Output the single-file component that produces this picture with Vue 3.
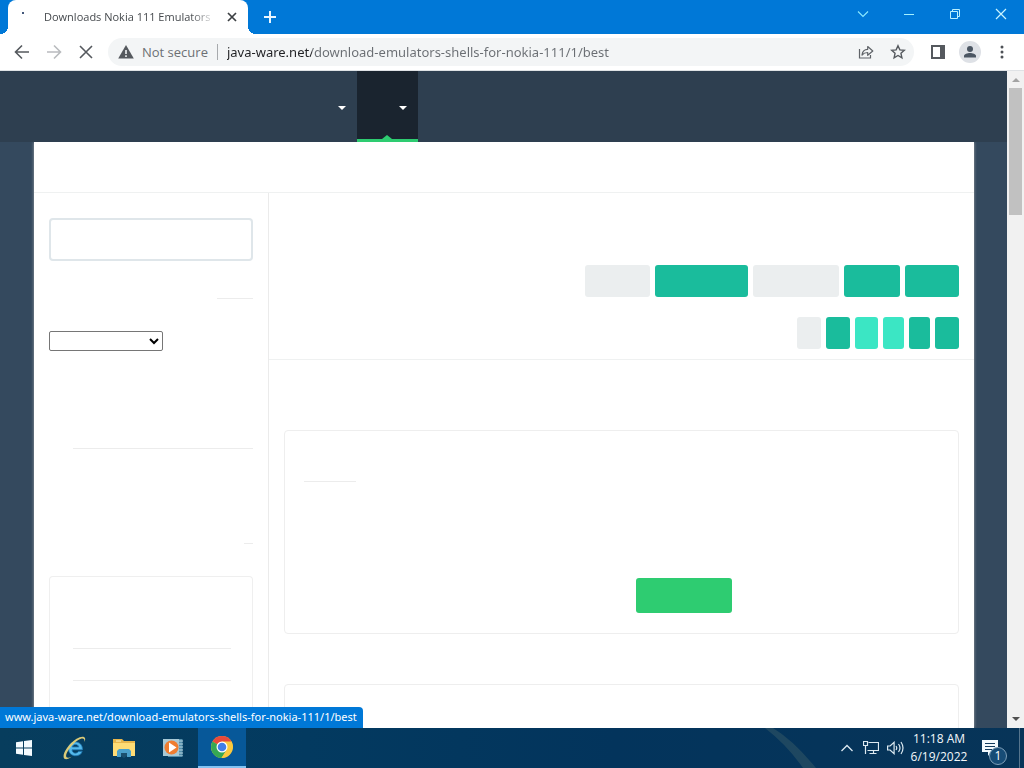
<script setup>
import { ref } from 'vue'

const address = ref('java-ware.net/download-emulators-shells-for-nokia-111/1/best')
const search = ref('')
const filters = [
  { name: 'Filter one', size: 'w65', tone: 'muted' },
  { name: 'Filter two', size: 'w93', tone: 'teal' },
  { name: 'Filter three', size: 'w86', tone: 'muted' },
  { name: 'Filter four', size: 'w56', tone: 'teal' },
  { name: 'Filter five', size: 'w54', tone: 'teal' }
]
const pages = [
  { name: 'Previous', size: 'w24', tone: 'muted' },
  { name: 'Page 1', size: 'w24', tone: 'teal' },
  { name: 'Page 2', size: 'w23', tone: 'mint' },
  { name: 'Page 3', size: 'w21', tone: 'mint' },
  { name: 'Page 4', size: 'w21', tone: 'teal' },
  { name: 'Next', size: 'w24', tone: 'teal' }
]
</script>

<template>
  <div class="screen">
    <header class="titlebar">
      <div class="tab">
        <span class="spinner"></span>
        <span class="tab-title">Downloads Nokia 111 Emulators</span>
        <button class="icon-btn tab-close" aria-label="Close tab">
          <svg width="10" height="10" viewBox="0 0 10 10"><path d="M1 1l8 8M9 1L1 9" stroke="#3c4043" stroke-width="1.7" fill="none" /></svg>
        </button>
      </div>
      <button class="icon-btn new-tab" aria-label="New tab">
        <svg width="14" height="14" viewBox="0 0 14 14"><path d="M7 1v12M1 7h12" stroke="#e9f6ff" stroke-width="2" fill="none" /></svg>
      </button>
      <div class="window-controls">
        <button class="icon-btn" aria-label="Search tabs">
          <svg width="12" height="12" viewBox="0 0 12 12"><path d="M1 3.5l5 5 5-5" stroke="#8deaff" stroke-width="1.1" fill="none" /></svg>
        </button>
        <button class="icon-btn" aria-label="Minimize">
          <svg width="12" height="12" viewBox="0 0 12 12"><path d="M1 6.5h10" stroke="#a5f1ff" fill="none" /></svg>
        </button>
        <button class="icon-btn" aria-label="Restore">
          <svg width="12" height="12" viewBox="0 0 12 12"><path d="M1.5 3.5h7v7h-7zM3.5 3.5v-2h7v7h-2" stroke="#b9f0ff" fill="none" /></svg>
        </button>
        <button class="icon-btn" aria-label="Close window">
          <svg width="12" height="12" viewBox="0 0 12 12"><path d="M1 1l10 10M11 1L1 11" stroke="#c9f4ff" stroke-width="1.2" fill="none" /></svg>
        </button>
      </div>
    </header>

    <div class="toolbar">
      <button class="icon-btn nav-btn" aria-label="Back">
        <svg width="16" height="16" viewBox="0 0 16 16"><path d="M15 8H2M8 1.5L1.5 8 8 14.5" stroke="#55595e" stroke-width="1.6" fill="none" /></svg>
      </button>
      <button class="icon-btn nav-btn" aria-label="Forward">
        <svg width="16" height="16" viewBox="0 0 16 16"><path d="M1 8h13M8 1.5L14.5 8 8 14.5" stroke="#b9bbbe" stroke-width="1.6" fill="none" /></svg>
      </button>
      <button class="icon-btn nav-btn" aria-label="Stop">
        <svg width="14" height="14" viewBox="0 0 14 14"><path d="M1 1l12 12M13 1L1 13" stroke="#55595e" stroke-width="1.6" fill="none" /></svg>
      </button>
      <div class="omnibox">
        <svg class="warn" width="16" height="14" viewBox="0 0 16 14"><path d="M8 0l7.8 13.500H.2z" fill="#55595e" /><path d="M8 5v4M8 10.300v1.700" stroke="#f1f3f4" stroke-width="1.6" /></svg>
        <label class="secure" for="address">Not secure</label>
        <span class="sep"></span>
        <input id="address" v-model="address" class="address" type="text" spellcheck="false" />
        <button class="icon-btn omni-btn" aria-label="Share">
          <svg width="16" height="16" viewBox="0 0 16 16"><path d="M1.5 5v9h11v-3" stroke="#5f6368" stroke-width="1.2" fill="none" /><path d="M4 11c.4-3.700 2.300-5.600 5.700-5.700V2.500L14.800 7 9.700 11.300V8.500C7.300 8.500 5.500 9.200 4 11z" stroke="#5f6368" stroke-width="1.2" stroke-linejoin="round" fill="none" /></svg>
        </button>
        <button class="icon-btn omni-btn" aria-label="Bookmark">
          <svg width="16" height="16" viewBox="0 0 16 16"><path d="M8 1.800l1.850 4.100 4.450.45-3.350 3 .95 4.400L8 11.500l-3.900 2.250.95-4.400-3.350-3 4.450-.45z" stroke="#55595e" stroke-width="1.4" fill="none" /></svg>
        </button>
      </div>
      <button class="icon-btn side-btn" aria-label="Side panel">
        <svg width="14" height="14" viewBox="0 0 14 14"><path d="M1 1h12v12H1z" stroke="#55595e" stroke-width="2" fill="none" /><path d="M9 1h4v12H9z" fill="#55595e" /></svg>
      </button>
      <button class="icon-btn side-btn" aria-label="Profile">
        <svg width="22" height="22" viewBox="0 0 22 22"><circle cx="11" cy="11" r="11" fill="#dee1e6" /><circle cx="11" cy="8" r="3" fill="#4b5663" /><path d="M5 16.500v-1.500c0-2 3.500-3 6-3s6 1 6 3v1.500z" fill="#4b5663" /></svg>
      </button>
      <button class="icon-btn side-btn" aria-label="Menu">
        <svg width="4" height="14" viewBox="0 0 4 14"><circle cx="2" cy="2" r="1.5" fill="#4d5156" /><circle cx="2" cy="7" r="1.5" fill="#4d5156" /><circle cx="2" cy="12" r="1.5" fill="#4d5156" /></svg>
      </button>
    </div>

    <div class="viewport">
      <div class="site">
        <nav class="site-nav">
          <a class="nav-item" href="#" aria-label="Catalog"><span class="caret"></span></a>
          <a class="nav-item active" href="#" aria-label="Downloads"><span class="caret"></span></a>
        </nav>
        <div class="container">
          <div class="crumbs"></div>
          <div class="columns">
            <aside class="sidebar">
              <input v-model="search" class="search" type="text" aria-label="Search" />
              <hr class="rule r36" />
              <select class="picker" aria-label="Category"><option></option></select>
              <hr class="rule r180" />
              <hr class="rule r9" />
              <div class="panel">
                <hr class="rule" />
                <hr class="rule" />
              </div>
            </aside>
            <main class="main">
              <div class="controls">
                <div class="button-row">
                  <button v-for="f in filters" :key="f.name" class="chip" :class="[f.size, f.tone]" :aria-label="f.name"></button>
                </div>
                <div class="button-row">
                  <button v-for="p in pages" :key="p.name" class="chip" :class="[p.size, p.tone]" :aria-label="p.name"></button>
                </div>
              </div>
              <div class="cards">
                <article class="card">
                  <hr class="rule r52" />
                  <button class="download" aria-label="Download"></button>
                </article>
                <article class="card"></article>
              </div>
            </main>
          </div>
        </div>
      </div>
      <div class="scrollbar">
        <svg class="arrow" width="17" height="17" viewBox="0 0 17 17"><path d="M5 11l4-4 4 4z" fill="#a3a3a3" /></svg>
        <div class="thumb"></div>
        <svg class="arrow" width="17" height="17" viewBox="0 0 17 17"><path d="M5 6l4 4 4-4z" fill="#505050" /></svg>
      </div>
      <div class="status">www.java-ware.net/download-emulators-shells-for-nokia-111/1/best</div>
    </div>

    <footer class="taskbar">
      <button class="task start" aria-label="Start">
        <svg width="16" height="16" viewBox="0 0 16 16"><path d="M0 2.200l7-1v6.300H0zM8 1l8-1v7.500H8zM0 8.500h7v6.300l-7-1zM8 8.500h8V16l-8-1z" fill="#f4fbff" /></svg>
      </button>
      <button class="task" aria-label="Internet Explorer">
        <svg width="26" height="26" viewBox="0 0 26 26">
          <path d="M20.500 14.800H10c.2 3.900 5 4.300 6.500 1.600h3.700C18.300 22.800 6.300 22.400 6.500 13.500 6.700 4.800 20.900 4.500 20.500 14.800zM10.200 12h6.600c-.6-3.500-6-3.500-6.600 0z" fill="#55b9ea" stroke="#1f78b4" stroke-width=".8" />
          <path d="M22.500 7C25 1.500 20.500 0 14.500 3.800 7 8.500 1 17.500 1.600 22c.4 3.300 4.500 2.500 8-.2-3.300 1.500-5.600 1.300-5.500-1 .2-4 6-11.800 11.800-15.500 4.300-2.700 7-2.300 6.600 1.700z" fill="#dccb78" />
        </svg>
      </button>
      <button class="task" aria-label="File Explorer">
        <svg width="22" height="20" viewBox="0 0 22 20"><path d="M0 1h9l2 2h11v6H0z" fill="#e8b64c" /><path d="M0 5h22v13H0z" fill="#ffdc75" /><path d="M3 3h5" stroke="#fff3bd" /><path d="M4 19v-6l2-2h10l2 2v6h-4v-4H8v4z" fill="#4aa0cb" /><path d="M8 15h6v3l-3 2-3-2z" fill="#1b506f" /></svg>
      </button>
      <button class="task" aria-label="Media Player">
        <svg width="20" height="20" viewBox="0 0 20 20"><path d="M5 1h14.500v18H5z" fill="#548eaa" /><path d="M0 1h16v17H0z" fill="#a8c9d6" /><path d="M17 2v16M19 2v16" stroke="#b7d5df" stroke-dasharray="2 1" /><circle cx="8.500" cy="9.500" r="7" fill="#ef7d31" /><path d="M6 4.500v10l7.500-5z" fill="#fff" /></svg>
      </button>
      <button class="task running" aria-label="Chrome">
        <svg width="24" height="24" viewBox="0 0 24 24"><circle cx="12" cy="12" r="11" fill="#fbc93e" /><path d="M12 12L2.500 6.500C6.700-.8 17.300-.8 21.500 6.500z" fill="#e9493b" /><path d="M2.500 6.500C-1.200 13 2.600 22.500 11.500 23l5.200-8.300L12 12z" fill="#36a853" /><path d="M12 6.500h9.500C25 13.500 20 23 11.500 23l5.300-8.200z" fill="#fbc93e" /><circle cx="12" cy="12" r="5.500" fill="#fff" /><circle cx="12" cy="12" r="4.300" fill="#427ee8" /></svg>
      </button>
      <div class="wallpaper">
        <svg width="80" height="40" viewBox="0 0 80 40"><path d="M4 0h8q20 12 43 40H42Q26 17 4 0z" fill="#7b8f78" opacity=".22" /></svg>
      </div>
      <div class="tray">
        <button class="icon-btn" aria-label="Show hidden icons">
          <svg width="12" height="8" viewBox="0 0 12 8"><path d="M.5 7L6 1.500 11.500 7" stroke="#dce9f1" stroke-width="1.300" fill="none" /></svg>
        </button>
        <button class="icon-btn" aria-label="Network">
          <svg width="16" height="14" viewBox="0 0 16 14"><path d="M5.500 1.500h10v8h-11M2.500 5v8M10.500 9.500v3M6.500 12.500h7M.5.5h4v4h-4z" stroke="#dce9f1" stroke-width="1.200" fill="none" /></svg>
        </button>
        <button class="icon-btn" aria-label="Volume">
          <svg width="17" height="14" viewBox="0 0 17 14"><path d="M.6 5h2.500l4-3.700v11.400L3.100 9H.6zM9 5q1.500 2 0 4M11.500 3q3 4 0 8M14 1q4 6 0 12" stroke="#dce9f1" stroke-width="1.200" fill="none" /></svg>
        </button>
      </div>
      <div class="clock"><time>11:18 AM</time><time>6/19/2022</time></div>
      <button class="icon-btn notify" aria-label="Notifications">
        <svg width="16" height="16" viewBox="0 0 16 16"><path d="M0 0h16v12H9l-3 4v-4H0z" fill="#f2f9fd" /><path d="M3 3.500h10M3 6.500h10M3 9.500h7" stroke="#123c5e" /></svg>
        <span class="badge">1</span>
      </button>
      <span class="show-desktop"></span>
    </footer>
  </div>
</template>

<style>
body { margin: 0; }
</style>

<style scoped>
* { box-sizing: border-box; }
.screen {
  display: flex; flex-direction: column; height: 100vh; overflow: hidden;
  font-family: "Open Sans", "Noto Sans", sans-serif; font-size: 13px; background: #fff;
}
button { border: 0; padding: 0; margin: 0; font: inherit; }
.icon-btn { display: flex; align-items: center; justify-content: center; background: none; }
svg { display: block; flex: none; }

.titlebar { display: flex; flex: none; height: 34px; background: #0078d7; }
.tab {
  position: relative; display: flex; align-items: center; width: 240px; margin-left: 8px;
  padding: 0 10px 0 14px; background: #fff; border-radius: 8px 8px 0 0;
}
.tab::before, .tab::after { content: ""; position: absolute; bottom: 0; width: 8px; height: 8px; }
.tab::before { left: -8px; background: radial-gradient(circle at 0 0, #0078d7 8px, #fff 8px); }
.tab::after { right: -8px; background: radial-gradient(circle at 100% 0, #0078d7 8px, #fff 8px); }
.spinner { width: 2px; height: 2px; margin: 0 20px 8px 0; background: #43577a; }
.tab-title {
  flex: 1; overflow: hidden; white-space: nowrap; font-size: 11px; line-height: 18px; color: #45494d;
  -webkit-mask-image: linear-gradient(90deg, #000 85%, transparent);
  mask-image: linear-gradient(90deg, #000 85%, transparent);
}
.tab-close { width: 12px; height: 16px; margin-left: 10px; }
.new-tab { width: 28px; margin-left: 8px; }
.window-controls { display: flex; margin-left: auto; padding-bottom: 6px; }
.window-controls .icon-btn { width: 46px; }

.toolbar {
  display: flex; align-items: center; flex: none; height: 37px; padding: 0 6px;
  background: #fff; border-bottom: 1px solid #dfe2e5;
}
.nav-btn { width: 32px; height: 28px; }
.omnibox {
  display: flex; flex: 1; align-items: center; min-width: 0; height: 28px; margin: 0 8px 0 6px;
  padding: 0 0 0 10px; border-radius: 14px; background: #f3f5f6;
}
.secure { margin-left: 8px; font-size: 13px; color: #6c7074; white-space: nowrap; }
.sep { width: 1px; height: 16px; margin: 0 9px; background: #a7aaad; }
.address {
  flex: 1; min-width: 0; padding: 0; border: 0; outline: 0; font-family: "Noto Sans", "Open Sans", sans-serif; font-size: 13px;
  color: #5f6368; background: linear-gradient(90deg, #202124 85px, #6a6e73 85px);
  -webkit-background-clip: text; background-clip: text; -webkit-text-fill-color: transparent;
}
.omni-btn { width: 32px; height: 28px; }
.side-btn { width: 32px; height: 28px; }

.viewport { position: relative; display: flex; flex: 1; min-height: 0; }
.site { flex: 1; min-width: 0; display: flex; flex-direction: column; overflow: hidden; background: #34495e; }
.site-nav { display: flex; flex: none; height: 71px; padding-left: 296px; background: #2e3f50; }
.nav-item { position: relative; display: flex; align-items: center; justify-content: flex-end; width: 61px; padding: 2px 11px 0 0; }
.nav-item.active { background: #1a242f; border-bottom: 3px solid #2ecc71; padding-top: 5px; }
.nav-item.active::after {
  content: ""; position: absolute; bottom: 0; left: 25px;
  border: 5px solid transparent; border-top: 0; border-bottom: 4px solid #2ecc71;
}
.caret { border: 4px solid transparent; border-bottom: 0; border-top-color: #fff; }
.container { flex: 1; display: flex; flex-direction: column; min-height: 0; margin: 0 33px 0 34px; background: #fff; box-shadow: 0 0 3px #a0a4a6; clip-path: inset(0 -4px); }
.crumbs { flex: none; height: 51px; border-bottom: 1px solid #eff1f1; }
.columns { display: flex; flex: 1; min-height: 0; }
.sidebar {
  display: flex; flex-direction: column; align-items: flex-end; flex: none; width: 235px;
  padding: 25px 15px 0; border-right: 1px solid #ebebeb;
}
.rule { flex: none; height: 1px; margin: 0; border: 0; background: #ececec; }
.search { flex: none; width: 100%; height: 43px; padding: 0 12px; border: 2px solid #dfe6ea; border-radius: 4px; background: #fff; font: inherit; }
.r36 { width: 36px; margin-top: 37px; }
.picker {
  flex: none; align-self: flex-start; width: 114px; height: 20px; margin-top: 32px;
  border: 1px solid #767676; border-radius: 2px; background: #fff; color: #000;
}
.r180 { width: 180px; margin-top: 97px; }
.r9 { width: 9px; margin-top: 94px; }
.panel {
  display: flex; flex-direction: column; gap: 31px; flex: 1; width: 100%; margin-top: 32px;
  padding: 71px 21px 0 23px; border: 1px solid #efefef; border-bottom: 0; border-radius: 4px 4px 0 0;
}
.main { flex: 1; min-width: 0; display: flex; flex-direction: column; }
.controls { display: flex; flex-direction: column; flex: none; gap: 20px; padding: 72px 15px 10px; border-bottom: 1px solid #eff1f1; }
.button-row { display: flex; justify-content: flex-end; gap: 5px; }
.chip { height: 32px; border-radius: 3px; }
.muted { background: #ebeeef; }
.teal { background: #1abc9c; }
.mint { background: #3be6c4; }
.w65 { width: 65px; }
.w93 { width: 93px; }
.w86 { width: 86px; }
.w56 { width: 56px; }
.w54 { width: 54px; }
.w24 { width: 24px; }
.w23 { width: 23px; }
.w21 { width: 21px; }
.cards { display: flex; flex-direction: column; gap: 50px; padding: 70px 15px 0; }
.card { flex: none; min-height: 204px; padding: 50px 19px 20px; border: 1px solid #eee; border-radius: 4px; }
.r52 { width: 52px; }
.download { display: block; width: 96px; height: 35px; margin: 96px 207px 0 auto; border-radius: 3px; background: #2ecc71; }

.scrollbar { display: flex; flex-direction: column; flex: none; width: 17px; background: #f1f1f1; }
.thumb { flex: none; width: 13px; height: 127px; margin: 0 auto auto 2px; background: #c1c1c1; }
.status {
  position: absolute; left: 0; bottom: 0; height: 21px; padding: 0 6px 0 5px; border-radius: 0 4px 0 0;
  background: #0078d7; color: #fff; font-family: "Noto Sans", "Open Sans", sans-serif; font-size: 11px; line-height: 20px; white-space: nowrap;
}

.taskbar { display: flex; flex: none; height: 40px; background: linear-gradient(90deg, #073d5d, #033a60 30%, #03345c 60%, #073458); }
.task { display: flex; align-items: center; justify-content: center; flex: none; width: 48px; margin-right: 1px; background: none; }
.start { margin-right: 3px; }
.running { background: #075899; border-bottom: 2px solid #83c3f2; }
.wallpaper { display: flex; flex: 1; justify-content: flex-end; overflow: hidden; }
.tray { display: flex; align-items: center; gap: 8px; }
.tray .icon-btn:first-child { margin-right: 2px; }
.clock { display: flex; flex-direction: column; align-items: center; width: 70px; padding-top: 2px; color: #f4f8fb; font-size: 12px; line-height: 18px; }
.notify { position: relative; width: 32px; }
.badge {
  position: absolute; left: 15px; top: 19px; width: 18px; height: 18px; border: 1px solid #7e9fb8;
  border-radius: 50%; background: #174c76; color: #fff; font-size: 12px; line-height: 16px;
}
.show-desktop { width: 5px; margin-left: 13px; border-left: 1px solid #56758d; }
</style>
